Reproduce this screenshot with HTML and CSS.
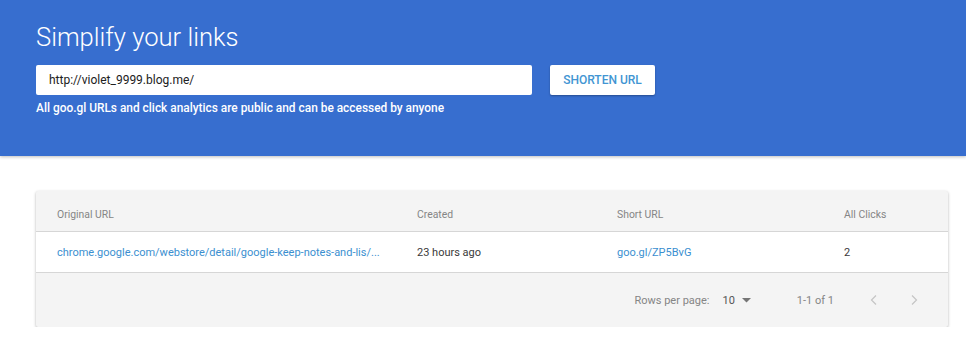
FILE: index.html
```html
<!DOCTYPE html>
<html lang="en">
<head>
<meta charset="UTF-8">
<meta name="viewport" content="width=device-width, initial-scale=1.0">
<title>goo.gl URL Shortener</title>
<link rel="stylesheet" href="styles.css">
</head>
<body>

<div class="hero">
    <h1>Simplify your links</h1>
    <div class="shorten-row">
        <div class="url-input">http://violet_9999.blog.me/</div>
        <button class="shorten-btn">SHORTEN URL</button>
    </div>
    <p class="notice">All goo.gl URLs and click analytics are public and can be accessed by anyone</p>
</div>

<div class="content">
    <div class="table-card">
        <div class="row head">
            <div class="col-orig">Original URL</div>
            <div class="col-created">Created</div>
            <div class="col-short">Short URL</div>
            <div class="col-clicks">All Clicks</div>
        </div>
        <div class="row body">
            <div class="col-orig link">chrome.google.com/webstore/detail/google-keep-notes-and-lis/...</div>
            <div class="col-created">23 hours ago</div>
            <div class="col-short link">goo.gl/ZP5BvG</div>
            <div class="col-clicks">2</div>
        </div>
        <div class="footer">
            <span class="rows-label">Rows per page:</span>
            <span class="rows-select">10
                <svg width="9" height="5" viewBox="0 0 9 5"><path d="M0 0h9L4.5 4.5z" fill="#757575"/></svg>
            </span>
            <span class="range">1-1 of 1</span>
            <span class="pager">
                <svg width="8" height="12" viewBox="0 0 8 12"><path d="M6 1.5L1.5 6 6 10.5" fill="none" stroke="#c4c4c4" stroke-width="1.2"/></svg>
                <svg width="8" height="12" viewBox="0 0 8 12"><path d="M2 1.5L6.5 6 2 10.5" fill="none" stroke="#c4c4c4" stroke-width="1.2"/></svg>
            </span>
        </div>
    </div>
</div>

</body>
</html>
```

FILE: styles.css
```css
body {
    font-family: Roboto, Arial, sans-serif;
    margin: 0;
    padding: 0;
    background-color: #fff;
    color: #3a3a3a;
}
.hero {
    background-color: #376ecf;
    color: #fff;
    padding: 22px 36px 40px;
    height: 94px;
    box-shadow: 0 1px 3px rgba(0, 0, 0, 0.25);
}
.hero h1 {
    margin: 0;
    font-size: 25.6px;
    font-weight: 300;
    line-height: 30px;
}
.shorten-row {
    display: flex;
    gap: 18px;
    margin-top: 13px;
}
.url-input {
    width: 496px;
    height: 30px;
    box-sizing: border-box;
    background-color: #fff;
    color: #212121;
    font-size: 12px;
    line-height: 30px;
    padding-left: 13px;
    border-radius: 2px;
}
.shorten-btn {
    width: 105px;
    height: 30px;
    border: none;
    border-radius: 2px;
    background-color: #fff;
    color: #4295d3;
    font-family: Roboto, Arial, sans-serif;
    font-weight: 500;
    font-size: 12px;
    box-shadow: 0 1px 2px rgba(0, 0, 0, 0.3);
    padding: 0;
}
.notice {
    margin: 6px 0 0;
    font-size: 11.9px;
    font-weight: 500;
    line-height: 14px;
}
.content {
    padding: 35px 18px 0 36px;
}
.table-card {
    background-color: #f4f4f4;
    box-shadow: 0 1px 3px rgba(0, 0, 0, 0.3);
    border-radius: 2px;
}
.row {
    display: flex;
    align-items: center;
    padding-left: 21px;
    font-size: 11px;
}
.row.head {
    height: 41px;
    box-sizing: border-box;
    padding-top: 7px;
    color: #858585;
    font-size: 10.4px;
    border-bottom: 1px solid #d6d6d6;
}
.row.body {
    height: 40px;
    background-color: #fff;
    border-bottom: 1px solid #d6d6d6;
}
.col-orig { width: 360px; }
.col-created { width: 200px; }
.col-short { width: 227px; }
.col-clicks { flex: 1; }
.link { color: #3b8fd0; }
.footer {
    height: 54px;
    display: flex;
    align-items: center;
    justify-content: flex-end;
    font-size: 11px;
    color: #858585;
    padding-right: 30px;
}
.rows-select {
    margin-left: 13px;
    display: flex;
    align-items: center;
    gap: 7px;
    color: #555;
}
.range {
    margin-left: 46px;
}
.pager {
    display: flex;
    gap: 32px;
    margin-left: 36px;
}
```
